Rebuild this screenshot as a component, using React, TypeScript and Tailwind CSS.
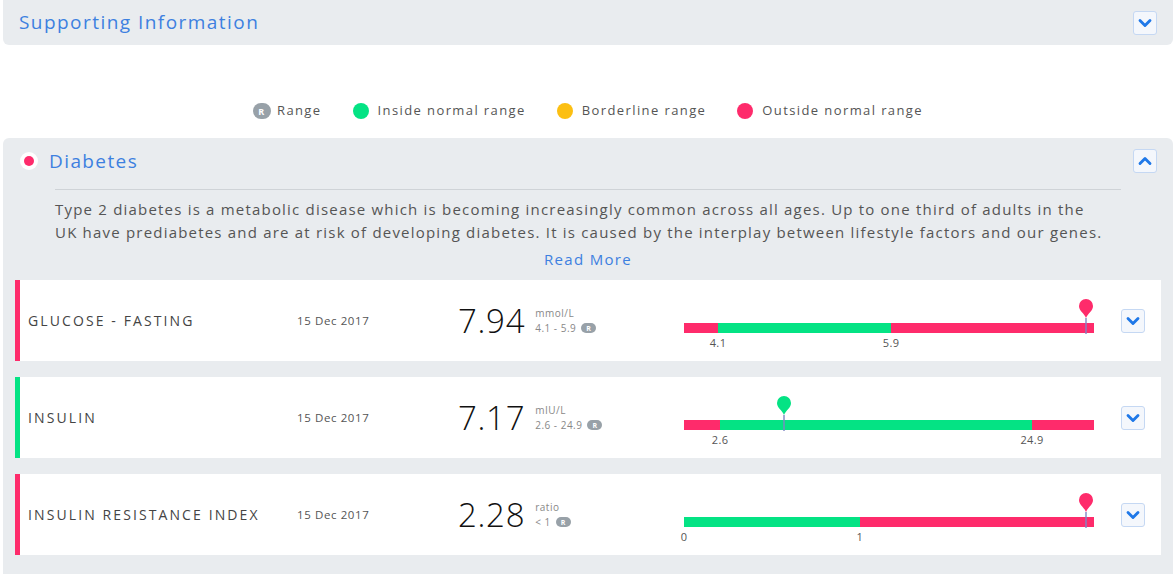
import { ChevronDown, ChevronUp } from 'lucide-react';

type Seg = { color: string; pct: number };
type Row = {
  name: string;
  date: string;
  value: string;
  unit: string;
  range: string;
  accent: string;
  segs: Seg[];
  labels: { text: string; pct: number }[];
  pin: { pct: number; color: string };
};

const RED = '#fe2b6b';
const GREEN = '#04e384';

const rows: Row[] = [
  {
    name: 'GLUCOSE - FASTING',
    date: '15 Dec 2017',
    value: '7.94',
    unit: 'mmol/L',
    range: '4.1 - 5.9',
    accent: RED,
    segs: [
      { color: RED, pct: 8.3 },
      { color: GREEN, pct: 42.2 },
      { color: RED, pct: 49.5 },
    ],
    labels: [
      { text: '4.1', pct: 8.3 },
      { text: '5.9', pct: 50.5 },
    ],
    pin: { pct: 98, color: RED },
  },
  {
    name: 'INSULIN',
    date: '15 Dec 2017',
    value: '7.17',
    unit: 'mIU/L',
    range: '2.6 - 24.9',
    accent: GREEN,
    segs: [
      { color: RED, pct: 8.8 },
      { color: GREEN, pct: 76.1 },
      { color: RED, pct: 15.1 },
    ],
    labels: [
      { text: '2.6', pct: 8.8 },
      { text: '24.9', pct: 84.9 },
    ],
    pin: { pct: 24.4, color: GREEN },
  },
  {
    name: 'INSULIN RESISTANCE INDEX',
    date: '15 Dec 2017',
    value: '2.28',
    unit: 'ratio',
    range: '< 1',
    accent: RED,
    segs: [
      { color: GREEN, pct: 42.9 },
      { color: RED, pct: 57.1 },
    ],
    labels: [
      { text: '0', pct: 0 },
      { text: '1', pct: 42.9 },
    ],
    pin: { pct: 98, color: RED },
  },
];

function ToggleButton({ up = false }: { up?: boolean }) {
  return (
    <button className="flex h-6 w-6 items-center justify-center rounded-[3px] border border-[#c5d8f3] bg-[#f4f7fc]">
      {up ? (
        <ChevronUp className="h-5 w-5 text-[#1f78e8]" strokeWidth={3.4} />
      ) : (
        <ChevronDown className="h-5 w-5 text-[#1f78e8]" strokeWidth={3.4} />
      )}
    </button>
  );
}

function RBadge({ small = false }: { small?: boolean }) {
  return small ? (
    <span className="ml-[5px] inline-flex h-[10px] w-[15px] items-center justify-center rounded-full bg-[#98a1a8] text-[7px] font-bold leading-none text-white">
      R
    </span>
  ) : (
    <span className="inline-flex h-[16px] w-[18px] items-center justify-center rounded-full bg-[#98a1a8] text-[9px] font-bold leading-none text-white">
      R
    </span>
  );
}

function Pin({ color }: { color: string }) {
  return (
    <svg width="14" height="19" viewBox="0 0 14 19">
      <path d="M7 19 C5 14 0 12 0 7 A7 7 0 0 1 14 7 C14 12 9 14 7 19 Z" fill={color} />
    </svg>
  );
}

function ResultRow({ row }: { row: Row }) {
  return (
    <div
      className="flex h-[81px] items-center border-l-[5px] bg-white pl-[8px] pr-4"
      style={{ borderLeftColor: row.accent }}
    >
      <div className="w-[269px] text-[14px] tracking-[2.1px] text-[#444]">{row.name}</div>
      <div className="w-[161px] text-[11.5px] tracking-[0.6px] text-[#555]">{row.date}</div>
      <div className="flex w-[226px] items-center">
        <span className="text-[33px] font-light leading-none tracking-[0.7px] text-[#111]">{row.value}</span>
        <div className="ml-[10px] flex flex-col gap-[3px] text-[10px] leading-[12px] tracking-[0.5px] text-[#888]">
          <span>{row.unit}</span>
          <span className="flex items-center">
            {row.range}
            <RBadge small />
          </span>
        </div>
      </div>
      <div className="relative h-full w-[410px]">
        <div className="absolute left-0 right-0 top-[43px] flex h-[10px]">
          {row.segs.map((s, i) => (
            <div key={i} className="h-full" style={{ width: `${s.pct}%`, backgroundColor: s.color }} />
          ))}
        </div>
        {row.labels.map((l, i) => (
          <span
            key={i}
            className="absolute top-[55px] -translate-x-1/2 text-[11px] tracking-[0.4px] text-[#555]"
            style={{ left: `${l.pct}%` }}
          >
            {l.text}
          </span>
        ))}
        <div className="absolute top-[19px] flex -translate-x-1/2 flex-col items-center" style={{ left: `${row.pin.pct}%` }}>
          <Pin color={row.pin.color} />
          <div className="h-[16px] w-[2px] bg-[#7f86c4]/70" />
        </div>
      </div>
      <div className="ml-[27px]">
        <ToggleButton />
      </div>
    </div>
  );
}

export default function App() {
  return (
    <div className="min-h-screen bg-white px-[3px] font-['Open_Sans',sans-serif]">
      {/* Supporting information */}
      <div className="flex h-[45px] items-center justify-between rounded-b-md bg-[#e9ecef] pl-4 pr-4">
        <h2 className="text-[19px] tracking-[1.45px] text-[#3d80e0]">Supporting Information</h2>
        <ToggleButton />
      </div>

      {/* Legend */}
      <div className="mt-[56px] flex h-5 items-center justify-center text-[13px] tracking-[1.4px] text-[#555]">
        <div className="flex items-center gap-[6px]">
          <RBadge />
          <span>Range</span>
        </div>
        <div className="ml-[31px] flex items-center gap-[9px]">
          <span className="h-4 w-4 rounded-full bg-[#04e384]" />
          <span>Inside normal range</span>
        </div>
        <div className="ml-[31px] flex items-center gap-[9px]">
          <span className="h-4 w-4 rounded-full bg-[#fcbf12]" />
          <span>Borderline range</span>
        </div>
        <div className="ml-[31px] flex items-center gap-[9px]">
          <span className="h-4 w-4 rounded-full bg-[#fe2b6b]" />
          <span>Outside normal range</span>
        </div>
      </div>

      {/* Diabetes */}
      <div className="mt-[17px] rounded-t-md bg-[#e9ecef] px-3 pb-6 pt-[11px]">
        <div className="flex h-6 items-center justify-between pl-[5px] pr-1">
          <div className="flex items-center">
            <span className="flex h-[18px] w-[18px] items-center justify-center rounded-full bg-white">
              <span className="h-[10px] w-[10px] rounded-full bg-[#fe2b6b]" />
            </span>
            <h3 className="ml-[11px] text-[19px] tracking-[1.4px] text-[#3d80e0]">Diabetes</h3>
          </div>
          <ToggleButton up />
        </div>
        <div className="mx-[40px] mt-4 border-t border-[#cfd3d7]" />
        <p className="ml-[40px] mr-[55px] mt-[8px] text-[15px] leading-[23px] tracking-[1.2px] text-[#555]">
          Type 2 diabetes is a metabolic disease which is becoming increasingly common across all ages. Up to one third of adults in the UK have prediabetes and are at risk of developing diabetes. It is caused by the interplay between lifestyle factors and our genes.
        </p>
        <div className="mt-[4px] text-center text-[15px] leading-[22px] tracking-[1.3px] text-[#3d80e0]">Read More</div>
        <div className="mt-[10px] flex flex-col gap-4">
          {rows.map((r) => (
            <ResultRow key={r.name} row={r} />
          ))}
        </div>
      </div>
    </div>
  );
}
